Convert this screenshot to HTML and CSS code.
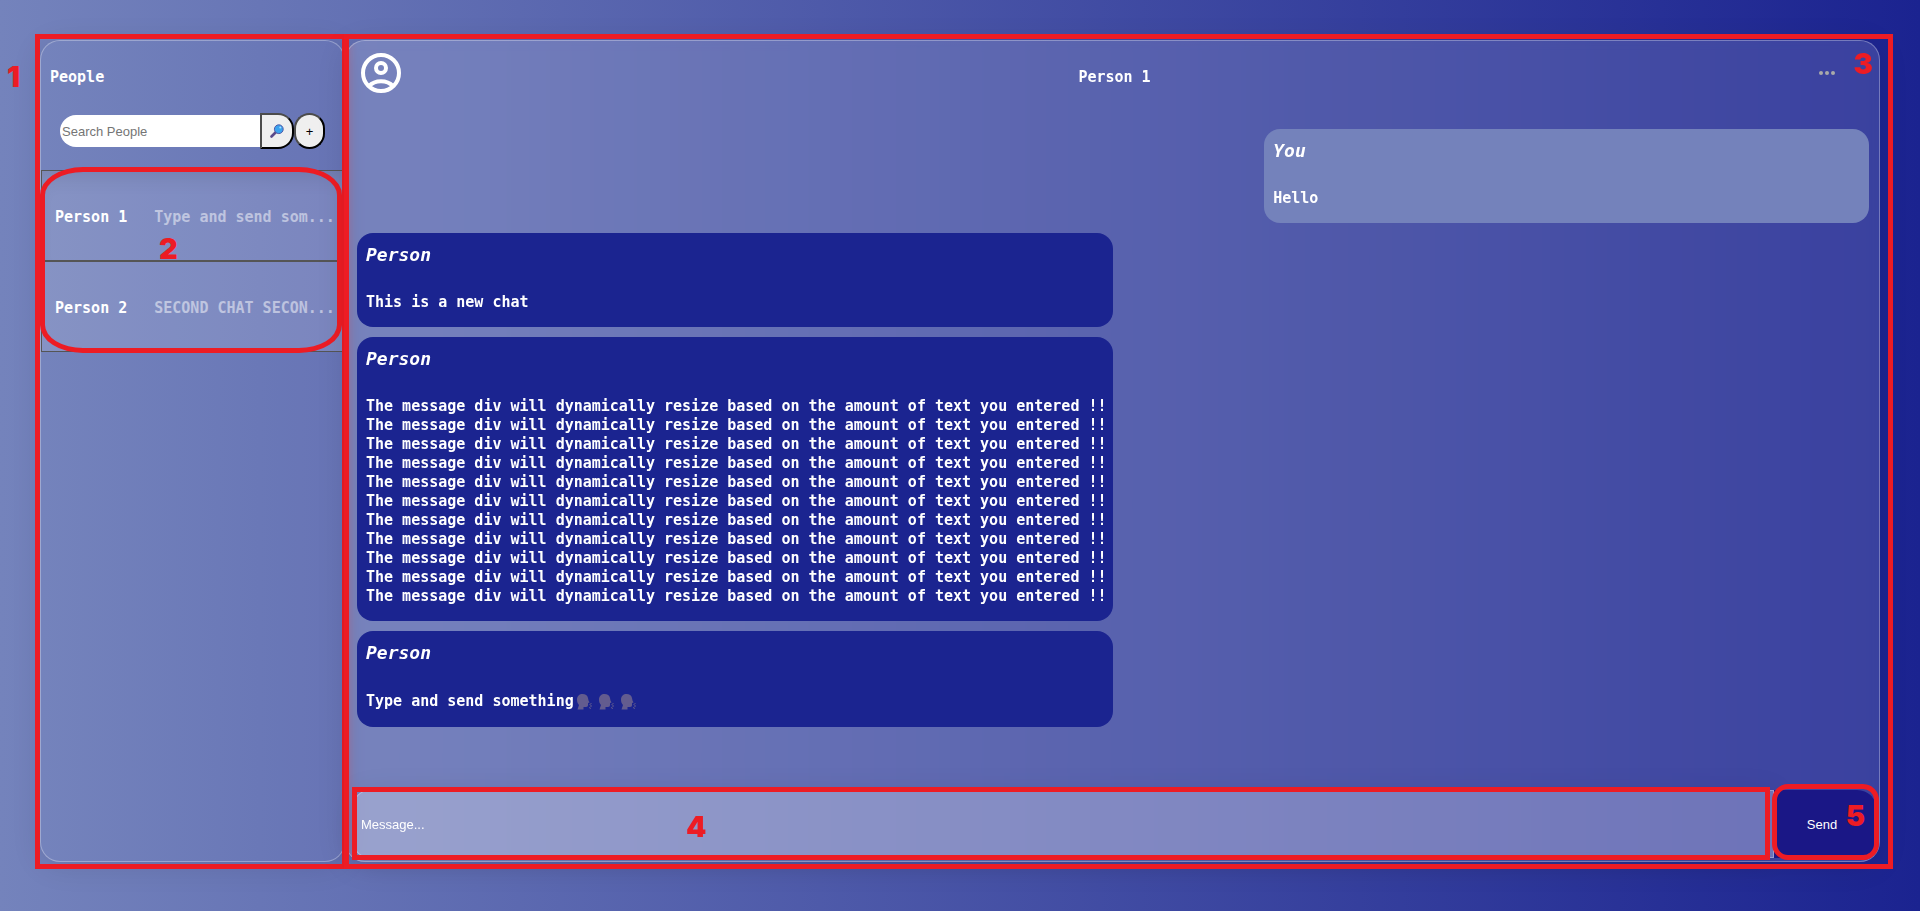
FILE: index.html
```html
<!DOCTYPE html>
<html lang="en">
<head>
<meta charset="utf-8">
<title>Chat</title>
<link rel="stylesheet" href="styles.css">
</head>
<body>
<svg class="sprite" aria-hidden="true">
  <symbol id="speaking" viewBox="0 0 32 32">
    <path d="M2 11C2 4 7 0 13 0c6 0 10 3 11 8l1 5 2 4-3 1v4c0 2-1 4-4 4h-5v5H3l3-9C3 19 2 15 2 11z"/>
    <path d="M27 21l4-2M28 24h4M26 27l4 2" fill="none" stroke="currentColor" stroke-width="2"/>
  </symbol>
</svg>
<main class="app">
  <aside class="panel sidebar">
    <h1 class="heading sidebar-title">People</h1>
    <form class="search">
      <input class="search-input" type="text" placeholder="Search People" aria-label="Search People">
      <button class="round-button search-button" type="button" aria-label="Search">
        <svg width="14" height="14" viewBox="0 0 14 14"><path d="M1.500 12.500L5.500 8.500" stroke="#5b4a8a" stroke-width="2.600" stroke-linecap="round"/><circle cx="8.800" cy="5.200" r="4.400" fill="#3ba3ee" stroke="#4f5aa8" stroke-width="1"/><circle cx="10.300" cy="3.600" r="1" fill="#a9dcff"/></svg>
      </button>
      <button class="round-button add-button" type="button" aria-label="Add person">+</button>
    </form>
    <div class="people">
      <button class="person" type="button"><span>Person 1</span><span class="preview">Type and send som...</span></button>
      <button class="person" type="button"><span>Person 2</span><span class="preview">SECOND CHAT SECON...</span></button>
      <span class="mark mark-people"></span>
      <span class="label label-people">2</span>
    </div>
    <span class="mark mark-sidebar"></span>
    <span class="label label-sidebar">1</span>
  </aside>
  <section class="panel chat">
    <header class="chat-header">
      <svg class="avatar" viewBox="0 0 48 48" fill="none" stroke="#fff" stroke-width="4"><circle cx="24" cy="24" r="18"/><circle cx="24" cy="19" r="5"/><path d="M12 37C18 30.500 30 30.500 36 37"/></svg>
      <h2 class="heading">Person 1</h2>
      <button class="menu-button" type="button" aria-label="More"><i></i><i></i><i></i></button>
    </header>
    <div class="messages">
      <article class="message mine"><h3 class="author">You</h3><p class="text">Hello</p></article>
      <article class="message"><h3 class="author">Person</h3><p class="text">This is a new chat</p></article>
      <article class="message"><h3 class="author">Person</h3><p class="text">The message div will dynamically resize based on the amount of text you entered !!
The message div will dynamically resize based on the amount of text you entered !!
The message div will dynamically resize based on the amount of text you entered !!
The message div will dynamically resize based on the amount of text you entered !!
The message div will dynamically resize based on the amount of text you entered !!
The message div will dynamically resize based on the amount of text you entered !!
The message div will dynamically resize based on the amount of text you entered !!
The message div will dynamically resize based on the amount of text you entered !!
The message div will dynamically resize based on the amount of text you entered !!
The message div will dynamically resize based on the amount of text you entered !!
The message div will dynamically resize based on the amount of text you entered !!</p></article>
      <article class="message"><h3 class="author">Person</h3><p class="text with-icons"><span>Type and send something</span><svg class="emoji"><use href="#speaking"/></svg><svg class="emoji"><use href="#speaking"/></svg><svg class="emoji"><use href="#speaking"/></svg></p></article>
    </div>
    <form class="composer">
      <div class="field">
        <input class="message-input" type="text" placeholder="Message..." aria-label="Message">
        <span class="mark mark-field"></span>
        <span class="label label-field">4</span>
      </div>
      <div class="send">
        <button class="send-button" type="button">Send</button>
        <span class="mark mark-send"></span>
        <span class="label label-send">5</span>
      </div>
    </form>
    <span class="mark mark-chat"></span>
    <span class="label label-chat">3</span>
  </section>
</main>
</body>
</html>
```
FILE: styles.css
```css
* { box-sizing: border-box; }

body {
  margin: 0;
  min-height: 100vh;
  display: flex;
  background: linear-gradient(to right, #7483bc, #1b2390);
  color: #fff;
  font-family: "DejaVu Sans Mono", monospace;
  font-size: 15px;
  font-weight: 700;
  line-height: 19px;
}

h1, h2, h3, p { margin: 0; }

.sprite { position: absolute; width: 0; height: 0; }

.app {
  flex: 1;
  display: grid;
  grid-template-columns: 305px 1fr;
  padding: 40px 40px 49px;
}

.panel {
  position: relative;
  display: flex;
  flex-direction: column;
  border: 1px solid rgba(255, 255, 255, 0.3);
  border-radius: 20px;
  box-shadow: 0 4px 30px rgba(0, 0, 0, 0.1);
}

.sidebar { background: rgba(255, 255, 255, 0.02); }

.chat {
  background: rgba(255, 255, 255, 0.13);
  backdrop-filter: blur(5px);
}

.heading { font-size: 15px; line-height: 19px; }

.sidebar-title { padding: 27px 9px 0; }

.search {
  display: flex;
  align-items: center;
  padding: 26px 19px 21px;
}

.search-input {
  flex: 1;
  min-width: 0;
  height: 32px;
  padding: 0 2px;
  border: 0;
  border-radius: 16px 0 0 16px;
  background: #fff;
  font: 13px "Liberation Sans", Arial, sans-serif;
}

.search-input::placeholder { color: #757575; }

.round-button {
  display: grid;
  place-items: center;
  height: 36px;
  padding: 0;
  border: 2px solid;
  border-color: #4c4c4c #000 #000 #4c4c4c;
  background: #efefef;
  color: #000;
  font: 13px "Liberation Sans", Arial, sans-serif;
}

.search-button { width: 34px; border-radius: 0 16px 16px 0; }
.add-button { width: 31px; border-radius: 16px; }

.people { position: relative; }

.person {
  display: flex;
  align-items: center;
  gap: 27px;
  width: 100%;
  height: 91px;
  padding: 3px 13px 0;
  border: 1px solid #555;
  background: rgba(255, 255, 255, 0.13);
  color: #fff;
  font: inherit;
  white-space: nowrap;
}

.person:first-child { box-shadow: inset 0 14px 20px -8px rgba(0, 0, 0, 0.1); }

.preview { color: rgba(255, 255, 255, 0.5); }

.chat-header {
  display: grid;
  grid-template-columns: 1fr auto 1fr;
  align-items: start;
  padding: 8px 32px 32px 36px;
}

.chat-header .heading { padding-top: 19px; }
.avatar { width: 48px; height: 48px; margin-left: -25px; }

.menu-button {
  display: flex;
  justify-content: center;
  justify-self: end;
  gap: 2px;
  width: 40px;
  padding: 22px 0;
  border: 0;
  background: none;
}

.menu-button i {
  width: 4px;
  height: 4px;
  border-radius: 50%;
  background: #aaa;
}

.messages {
  flex: 1;
  display: flex;
  flex-direction: column;
  align-items: flex-start;
  gap: 10px;
  padding: 0 10px 0 11px;
}

.message {
  width: 50%;
  padding: 10px 4px 15px 9px;
  border-radius: 16px;
  background: #1b2490;
}

.mine {
  align-self: flex-end;
  width: 40%;
  background: #7482bb;
}

.author {
  margin-bottom: 26px;
  font-size: 18px;
  font-style: italic;
  line-height: 24px;
}

.text { white-space: pre-wrap; }

.with-icons {
  display: flex;
  align-items: center;
  gap: 6px;
  line-height: 21px;
}

.with-icons span { margin-right: -4px; }
.emoji { width: 16px; height: 16px; fill: #635c8f; color: #635c8f; }

.composer {
  display: flex;
  padding: 0 2px 3px 7px;
}

.field { position: relative; flex: 1; }
.send { position: relative; }

.message-input {
  display: block;
  width: 100%;
  height: 68px;
  padding: 0 7px;
  border: 1px solid rgba(255, 255, 255, 0.3);
  border-radius: 16px 0 0 16px;
  background: rgba(255, 255, 255, 0.25);
  box-shadow: 0 4px 30px rgba(0, 0, 0, 0.1);
  font: 13px "Liberation Sans", Arial, sans-serif;
  color: #fff;
}

.message-input::placeholder { color: #fff; }

.send-button {
  width: 103px;
  height: 68px;
  padding: 0 7px 0 0;
  border: 0;
  border-radius: 0 20px 20px 0;
  background: #1a1786;
  color: #fff;
  font: 13px "Liberation Sans", Arial, sans-serif;
}

/* Numbered callouts laid over the interface */
.mark {
  position: absolute;
  border: 5px solid #ed1c24;
  pointer-events: none;
}

.label {
  position: absolute;
  color: #ed1c24;
  font: 900 29px/32px Inter, "DejaVu Sans", sans-serif;
  pointer-events: none;
}

.mark-sidebar { inset: -7px -3px -8px -6px; }
.mark-chat { inset: -7px -14px -8px -2px; }
.mark-people { inset: -3px 2px -1px -1px; border-radius: 43px / 28px; }
.mark-field { inset: -3px 4px -2px -1px; }
.mark-send { inset: -6px -2px -2px -2px; border-radius: 16px; }

.label-sidebar { top: 20px; left: -34px; }
.label-people { top: 63px; left: 118px; }
.label-chat { top: 7px; right: 6px; }
.label-field { top: 21px; left: 333px; }
.label-send { top: 10px; right: 12px; }
```
